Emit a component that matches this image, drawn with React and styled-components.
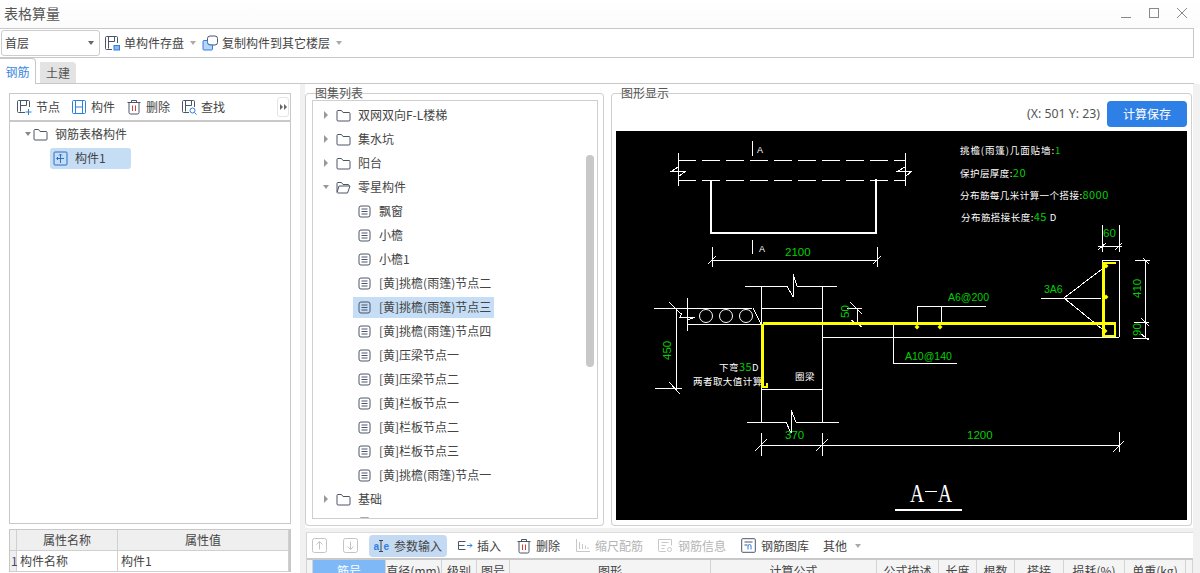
import React from "react";
import styled, { createGlobalStyle } from "styled-components";

const GlobalStyle = createGlobalStyle`
  html, body {
    margin: 0;
    padding: 0;
    background: #fff;
  }
  * {
    box-sizing: border-box;
  }
`;

const Page = styled.div`
  width: 1200px;
  height: 573px;
  overflow: hidden;
  display: flex;
  flex-direction: column;
  background: #fff;
  color: #444;
  font-family: "Noto Sans CJK SC", "Noto Sans", sans-serif;
  font-size: 12px;
  line-height: 16px;
`;

const TitleBar = styled.div`
  height: 28px;
  flex: none;
  display: flex;
  align-items: center;
  justify-content: space-between;
  padding: 0 13px 2px 4px;
  background: linear-gradient(#fff, #fbfbfb);
`;

const Title = styled.div`
  font-size: 14px;
  color: #555;
`;

const WindowButtons = styled.div`
  display: flex;
  align-items: center;
  gap: 18px;
`;

const TopBar = styled.div`
  width: 1194px;
  height: 30px;
  flex: none;
  display: flex;
  align-items: center;
  padding-left: 1px;
  border: 1px solid #c8c8c8;
  border-left: 0;
`;

const Select = styled.div`
  width: 99px;
  height: 26px;
  display: flex;
  align-items: center;
  justify-content: space-between;
  padding: 0 5px 0 3px;
  margin-right: 4px;
  border: 1px solid #ccc;
  border-radius: 3px;
`;

const Caret = styled.i`
  display: block;
  flex: none;
  width: 0;
  height: 0;
  margin-left: ${(p) => p.$left || 0}px;
  margin-right: ${(p) => p.$right || 0}px;
  border-left: 3px solid transparent;
  border-right: 3px solid transparent;
  border-top: 4px solid ${(p) => p.$color || "#aaa"};
`;

const SideCaret = styled.i`
  display: block;
  flex: none;
  width: 0;
  height: 0;
  border-top: ${(p) => p.$size || 4}px solid transparent;
  border-bottom: ${(p) => p.$size || 4}px solid transparent;
  border-left: ${(p) => p.$size || 4}px solid ${(p) => p.$color || "#999"};
`;

const ToolItem = styled.div`
  display: flex;
  align-items: center;
  gap: ${(p) => p.$gap || 5}px;
  flex: none;
  height: 22px;
  margin-left: ${(p) => p.$left || 0}px;
  color: ${(p) => (p.$disabled ? "#b4b4b4" : "#444")};
  ${(p) => p.$active && "background: #c4daf2; border-radius: 4px; padding: 0 0 0 5px;"}
  ${(p) => p.$active && "width: 78px;"}
`;

const Tabs = styled.div`
  width: 1194px;
  height: 26px;
  flex: none;
  display: flex;
  align-items: flex-end;
  gap: 4px;
  border-bottom: 1px solid #c8c8c8;
`;

const Tab = styled.div`
  width: 36px;
  height: ${(p) => (p.$active ? 26 : 21)}px;
  margin-bottom: ${(p) => (p.$active ? -1 : 0)}px;
  display: flex;
  align-items: center;
  justify-content: center;
  font-size: 12px;
  color: ${(p) => (p.$active ? "#3b88e0" : "#555")};
  background: ${(p) => (p.$active ? "#fff" : "#e3e3e3")};
  border: ${(p) => (p.$active ? "1px solid #c8c8c8" : "0")};
  border-left: 0;
  border-bottom: 0;
  border-radius: 0 4px 0 0;
`;

const Body = styled.div`
  flex: 1;
  min-height: 0;
  display: flex;
  background: #f1f1f1;
`;

const LeftColumn = styled.div`
  width: 300px;
  flex: none;
  display: flex;
  flex-direction: column;
  padding: 9px 9px 0;
  background: #fff;
`;

const LeftToolbar = styled.div`
  height: 29px;
  flex: none;
  display: flex;
  align-items: center;
  padding: 0 1px 0 6px;
  border: 1px solid #c8c8c8;
  border-bottom: 2px solid #c8c8c8;
`;

const MoreButton = styled.div`
  width: 12px;
  height: 20px;
  margin-left: auto;
  display: flex;
  align-items: center;
  justify-content: center;
  gap: 1px;
  border: 1px solid #e4e4e4;
  border-radius: 3px;
`;

const LeftTree = styled.div`
  height: 402px;
  flex: none;
  border: 1px solid #c8c8c8;
  border-top: 0;
`;

const Row = styled.div`
  height: 24px;
  display: flex;
  align-items: center;
  padding-left: ${(p) => p.$indent}px;
`;

const Arrow = styled.div`
  width: 10px;
  flex: none;
  display: flex;
  justify-content: center;
  margin-right: ${(p) => p.$gap || 0}px;
`;

const RowLabel = styled.span`
  margin-left: ${(p) => p.$gap}px;
  white-space: nowrap;
`;

const Selected = styled.div`
  height: 21px;
  width: ${(p) => p.$width}px;
  display: flex;
  align-items: center;
  padding-left: ${(p) => p.$pad}px;
  background: #c5ddf5;
  border-radius: ${(p) => p.$radius || 0}px;
`;

const PropsTable = styled.div`
  margin-top: 5px;
  border-top: 1px solid #c8c8c8;
  border-left: 1px solid #c8c8c8;
  border-right: 2px solid #c8c8c8;
`;

const PropsRow = styled.div`
  height: 21px;
  display: grid;
  grid-template-columns: 7px 101px 1fr;
  border-bottom: 1px solid #d0d0d0;
  background: ${(p) => (p.$head ? "#efefef" : "#fff")};
`;

const PropsCell = styled.div`
  display: flex;
  align-items: center;
  justify-content: ${(p) => (p.$head ? "center" : "flex-start")};
  padding-left: ${(p) => (p.$head ? 0 : 3)}px;
  border-right: 1px solid #d0d0d0;
  background: ${(p) => (p.$gray ? "#efefef" : "transparent")};
  ${(p) => p.$gray && "padding-left: 1px; color: #446;"}
`;

const Splitter = styled.div`
  width: 5px;
  flex: none;
`;

const RightColumn = styled.div`
  width: 888px;
  flex: none;
  display: flex;
  flex-direction: column;
`;

const Panels = styled.div`
  height: 444px;
  flex: none;
  display: flex;
  gap: 7px;
  padding-top: 9px;
  background: #fff;
`;

const GroupBox = styled.div`
  position: relative;
  height: 433px;
  width: ${(p) => p.$width}px;
  flex: none;
  display: flex;
  flex-direction: column;
  padding: ${(p) => (p.$tight ? "6px 5px 6px 6px" : "5px 4px")};
  border: 1px solid #d0d0d0;
  border-top-color: #cfcfcf;
  border-radius: 4px;
`;

const Legend = styled.div`
  position: absolute;
  top: -8px;
  left: 9px;
  line-height: 14px;
  color: #555;
`;

const ListBox = styled.div`
  position: relative;
  height: 419px;
  overflow: hidden;
  padding-top: 2px;
  border: 1px solid #cfcfcf;
`;

const ScrollThumb = styled.div`
  position: absolute;
  top: 54px;
  right: 3px;
  width: 8px;
  height: 212px;
  border-radius: 4px;
  background: #c8c8c8;
`;

const ViewHead = styled.div`
  height: 28px;
  flex: none;
  display: flex;
  align-items: center;
  justify-content: flex-end;
  gap: 7px;
  margin-bottom: 4px;
  padding-top: 2px;
`;

const Coords = styled.span`
  font-family: "Noto Sans", sans-serif;
  font-size: 12.3px;
  color: #555;
`;

const SaveButton = styled.div`
  width: 80px;
  height: 26px;
  display: flex;
  align-items: center;
  justify-content: center;
  background: #2f80e6;
  border-radius: 4px;
  color: #fff;
`;

const Drawing = styled.svg`
  display: block;
  width: 571px;
  height: 389px;
  flex: none;
  background: #000;
`;

const DrawText = styled.text`
  font-family: ${(p) => (p.$cjk ? '"Noto Sans CJK SC", sans-serif' : '"Liberation Sans", sans-serif')};
  font-size: ${(p) => p.$size || 11.5}px;
  letter-spacing: ${(p) => p.$track || 0}px;
  fill: ${(p) => (p.$white ? "#fff" : "#00d000")};
`;

const TitleMark = styled.text`
  font-family: "Liberation Serif", serif;
  font-size: 26px;
  fill: #fff;
`;

const BottomPanel = styled.div`
  flex: 1;
  margin-top: 4px;
  margin-left: 1px;
  background: #fff;
  border-top: 1px solid #dcdcdc;
  border-left: 1px solid #d4d4d4;
`;

const BottomToolbar = styled.div`
  height: 27px;
  display: flex;
  align-items: center;
  padding-left: 5px;
  border-bottom: 2px solid #c8c8c8;
`;

const GridHead = styled.div`
  height: 22px;
  display: grid;
  grid-template-columns: 6px 73px 56px 35px 33px 201px 166px 62px 38px 38px 49px 61px 61px 1fr;
  background: #f4f4f4;
`;

const HeadCell = styled.div`
  display: flex;
  align-items: center;
  justify-content: center;
  white-space: nowrap;
  border-right: 1px solid #d4d4d4;
  color: ${(p) => (p.$on ? "#fff" : "#444")};
  background: ${(p) => (p.$on ? "#7fb8f7" : "transparent")};
`;

const Ico = styled.svg`
  display: block;
  flex: none;
  fill: none;
  stroke: ${(p) => p.$stroke || "#4a5568"};
  stroke-width: 1;
`;

const IconLetter = styled.text`
  font-family: "Liberation Sans", sans-serif;
  font-size: 10px;
  font-weight: 700;
  fill: #2d7fe0;
  stroke: none;
`;

const BLUE = "#2d7fe0";

const NodeIcon = () => (
  <Ico width="16" height="16" viewBox="0 0 16 16">
    <path d="M9 13.5H2.5a1 1 0 0 1-1-1v-10a1 1 0 0 1 1-1h10a1 1 0 0 1 1 1V8M4.5 1.5v11M10.5 1.5v5M4.5 6.5h6" />
    <path d="M12.5 10v6M9.5 13h6" stroke={BLUE} />
  </Ico>
);

const PartIcon = () => (
  <Ico width="16" height="16" viewBox="0 0 16 16" $stroke={BLUE}>
    <rect x="1.5" y="1.5" width="13" height="13" rx="1" />
    <path d="M4.5 1.5v13M11.5 1.5v13M4.5 8h7" />
  </Ico>
);

const TrashIcon = ({ color = "#e03b3b" }) => (
  <Ico width="16" height="16" viewBox="0 0 16 16">
    <path d="M1.5 3.5h13M5.5 3V1.5h5V3M3 3.5v10a1.5 1.5 0 0 0 1.5 1.5h7a1.5 1.5 0 0 0 1.5-1.5v-10" />
    <path d="M6.5 6.5v5.5M9.5 6.5v5.5" stroke={color} />
  </Ico>
);

const FindIcon = () => (
  <Ico width="16" height="16" viewBox="0 0 16 16">
    <path d="M8 13.5H2.5a1 1 0 0 1-1-1v-10a1 1 0 0 1 1-1h10a1 1 0 0 1 1 1V8M4.5 1.5v11M10.5 1.5v5M4.5 6.5h6" />
    <circle cx="11.5" cy="11.5" r="2.5" stroke={BLUE} />
    <path d="M13.5 13.5l2 2" stroke={BLUE} />
  </Ico>
);

const SaveIcon = () => (
  <Ico width="16" height="16" viewBox="0 0 16 16">
    <path d="M8 14.5H2.5a1 1 0 0 1-1-1v-11a1 1 0 0 1 1-1h10a1 1 0 0 1 1 1V8M4.5 1.5v12M10.5 1.5v5M4.5 6.5h6" />
    <rect x="10" y="10.5" width="5.5" height="4.5" fill="#8ab8ee" stroke={BLUE} />
  </Ico>
);

const CopyIcon = () => (
  <Ico width="16" height="16" viewBox="0 0 16 16">
    <rect x="5.5" y="1" width="10" height="9" rx="2.5" />
    <path d="M5.5 5.5H2a1 1 0 0 0-1 1V14a1 1 0 0 0 1 1h7.5a1 1 0 0 0 1-1v-4H8A2.5 2.5 0 0 1 5.5 7.5z" fill="#b9d5f5" stroke={BLUE} />
  </Ico>
);

const FolderIcon = () => (
  <Ico width="15" height="13" viewBox="0 0 15 13">
    <path d="M1 11V2.5a1 1 0 0 1 1-1h3.5l1.5 2h6a1 1 0 0 1 1 1V11a1 1 0 0 1-1 1H2a1 1 0 0 1-1-1z" />
  </Ico>
);

const OpenFolderIcon = () => (
  <Ico width="15" height="13" viewBox="0 0 15 13">
    <path d="M1 11V2.5a1 1 0 0 1 1-1h3.5l1.5 2h5a1 1 0 0 1 1 1V5M1 11.5l2-6.5h11l-2.5 7H2a1 1 0 0 1-1-.5z" />
  </Ico>
);

const DocIcon = () => (
  <Ico width="13" height="13" viewBox="0 0 13 13">
    <rect x="1" y="1" width="11" height="11" rx="2" />
    <path d="M3.5 4h6M3.5 6.5h6M3.5 9h6" />
  </Ico>
);

const ComponentIcon = () => (
  <Ico width="15" height="15" viewBox="0 0 15 15" $stroke="#2d6fc0">
    <rect x="1" y="1" width="13" height="13" rx="1" />
    <path d="M7.5 3v9M4 7.5h7M5 6L3.5 7.5 5 9M6 4.5L7.5 3 9 4.5" />
  </Ico>
);

const ArrowBoxIcon = ({ down }) => (
  <Ico width="15" height="15" viewBox="0 0 15 15" $stroke="#c4c4c4">
    <rect x="0.5" y="0.5" width="14" height="14" rx="2" />
    <path d={down ? "M7.5 3.5v8M4.5 8.5l3 3 3-3" : "M7.5 11.5v-8M4.5 6.5l3-3 3 3"} />
  </Ico>
);

const ParamIcon = () => (
  <Ico width="16" height="14" viewBox="0 0 16 14" $stroke="#444">
    <IconLetter x="-0.5" y="10.5">a</IconLetter>
    <path d="M5 1.5h2M9 1.5H7v11M5 12.5h4" />
    <IconLetter x="9.5" y="10.5">e</IconLetter>
  </Ico>
);

const InsertIcon = () => (
  <Ico width="16" height="12" viewBox="0 0 16 12">
    <path d="M8.5 1.5h-7v8h7M1.5 5.5h6" />
    <path d="M10 5.5h5M13 3.5l2 2-2 2" stroke={BLUE} />
  </Ico>
);

const ScaleIcon = () => (
  <Ico width="15" height="15" viewBox="0 0 15 15" $stroke="#c8c8c8">
    <path d="M1.5 1v12.5H15M4.5 4v7M7.5 6v5M10.5 7.5V11M13 9v2" />
  </Ico>
);

const InfoIcon = () => (
  <Ico width="15" height="15" viewBox="0 0 15 15" $stroke="#c8c8c8">
    <path d="M8 13.5H1.5a1 1 0 0 1-1-1v-11h13v6M3.5 4.5h7M3.5 7.5h4M3.5 10.5h3" />
    <circle cx="11.5" cy="11.5" r="2" />
  </Ico>
);

const LibraryIcon = () => (
  <Ico width="15" height="15" viewBox="0 0 15 15">
    <rect x="0.7" y="0.7" width="13.6" height="13.6" rx="1" />
    <path d="M3.5 4h8M3.5 7h3" />
    <path d="M7 11.5V8a1.5 1.5 0 0 1 3 0v3.5" stroke={BLUE} />
  </Ico>
);

const treeItems = [
  { label: "双网双向F-L楼梯", kind: "folder" },
  { label: "集水坑", kind: "folder" },
  { label: "阳台", kind: "folder" },
  { label: "零星构件", kind: "open" },
  { label: "飘窗", kind: "doc" },
  { label: "小檐", kind: "doc" },
  { label: "小檐1", kind: "doc" },
  { label: "[黄]挑檐(雨篷)节点二", kind: "doc" },
  { label: "[黄]挑檐(雨篷)节点三", kind: "doc", selected: true },
  { label: "[黄]挑檐(雨篷)节点四", kind: "doc" },
  { label: "[黄]压梁节点一", kind: "doc" },
  { label: "[黄]压梁节点二", kind: "doc" },
  { label: "[黄]栏板节点一", kind: "doc" },
  { label: "[黄]栏板节点二", kind: "doc" },
  { label: "[黄]栏板节点三", kind: "doc" },
  { label: "[黄]挑檐(雨篷)节点一", kind: "doc" },
  { label: "基础", kind: "folder" },
  { label: "", kind: "doc" },
];

const gridColumns = ["", "筋号", "直径(mm)", "级别", "图号", "图形", "计算公式", "公式描述", "长度", "根数", "搭接", "损耗(%)", "单重(kg)", ""];

// CAD sheet, coordinates are the screen pixels of the black area
const whiteLines = [
  "M678 153V186M905 153V186M752 141V156M752 240V254",
  "M678 167L672 171H686L678 177M905 167L898 171H912L905 177",
  "M712 247V267M877 247V267M712 260H877M708 264L716 256M873 264L881 256",
  "M745 286H787L793 297V274L797 286H837",
  "M747 422H786L791 433V410L796 422H839",
  "M761 286V422M822 286V422M761 308H822M654 308H752M687 324H761M687 298V331",
  "M682 313L680 317H695L688 320M753 308L761 324",
  "M676 308V388M655 388H682M669 302L681 314M669 382L680 394",
  "M761 389H822M822 337H1119M893 325V363H957",
  "M917 306H986M917 306V322M941 306V322",
  "M1102 260V337M1119 260V337M1102 260H1119",
  "M1041 298H1101M1064 298L1102 269M1064 298L1102 329",
  "M1102 225V252M1119 225V252M1098 246H1122M1098 250L1106 243M1115 250L1122 243",
  "M1145 260V338M1135 260H1150M1134 322H1149M1133 338H1149M1143 258L1149 264M1141 318L1149 326M1141 334L1149 340",
  "M761 445H1119M761 433V456M822 433V456M1119 432V452M755 451L767 439M816 451L828 439M1113 452L1124 441",
  "M847 308H862M857 308V323M850 302L862 314M851 320L862 327",
];

const dotPoints = [
  [917, 327],
  [940, 327],
  [1106, 266],
  [1106, 297],
  [1105, 331],
];

function Sheet() {
  return (
    <Drawing viewBox="616 131 571 389">
      <g fill="none" stroke="#fff" strokeWidth="1" shapeRendering="crispEdges">
        {whiteLines.map((d) => (
          <path key={d} d={d} />
        ))}
        <path d="M678 160H905M678 180H905" strokeDasharray="18 6" />
        <path d="M711 180V233H876V179" strokeWidth="2" />
        <path d="M895 510H962" strokeWidth="2" />
        <path d="M925 491H937" />
      </g>
      <g fill="none" stroke="#fff" strokeWidth="1">
        <circle cx="706" cy="316" r="6.5" />
        <circle cx="726" cy="316" r="6.5" />
        <circle cx="746" cy="316" r="6.5" />
      </g>
      <path
        d="M762.5 323.5H1115V336H1103.5V263H1116M762.5 323.5V387H767V383"
        fill="none"
        stroke="#ffff00"
        strokeWidth="2.6"
        shapeRendering="crispEdges"
      />
      {dotPoints.map(([x, y]) => (
        <path key={`${x}-${y}`} d={`M${x} ${y - 2.5}L${x + 2.5} ${y}L${x} ${y + 2.5}L${x - 2.5} ${y}Z`} fill="#ffff00" />
      ))}

      <DrawText $white $size={9} x="757" y="153">A</DrawText>
      <DrawText $white $size={9} x="759" y="252">A</DrawText>
      <DrawText x="785" y="256">2100</DrawText>

      <DrawText $white $cjk $size={9.5} $track={0.9} x="960" y="154">挑檐(雨篷)几面贴墙:<tspan fill="#00d000">1</tspan></DrawText>
      <DrawText $white $cjk $size={9.5} $track={0.45} x="960" y="177">保护层厚度:<tspan fill="#00d000" fontSize="11">20</tspan></DrawText>
      <DrawText $white $cjk $size={9.5} $track={0.45} x="960" y="199">分布筋每几米计算一个搭接:<tspan fill="#00d000" fontSize="11">8000</tspan></DrawText>
      <DrawText $white $cjk $size={9.5} $track={0.45} x="961" y="221">分布筋搭接长度:<tspan fill="#00d000" fontSize="11">45 </tspan>D</DrawText>

      <DrawText x="1103" y="237">60</DrawText>
      <DrawText x="1044" y="293" $size={10.5}>3A6</DrawText>
      <DrawText x="948" y="301" $size={10.5}>A6@200</DrawText>
      <DrawText x="905" y="360" $size={10.5}>A10@140</DrawText>
      <DrawText x="785" y="439">370</DrawText>
      <DrawText x="967" y="439">1200</DrawText>
      <DrawText x="849" y="318" transform="rotate(-90 849 318)">50</DrawText>
      <DrawText x="671" y="360" transform="rotate(-90 671 360)">450</DrawText>
      <DrawText x="1141" y="298" transform="rotate(-90 1141 298)">410</DrawText>
      <DrawText x="1141" y="336" transform="rotate(-90 1141 336)">90</DrawText>

      <DrawText $white $cjk $size={9.5} $track={0.45} x="719" y="371">下弯<tspan fill="#00d000" fontSize="11">35</tspan>D</DrawText>
      <DrawText $white $cjk $size={9.5} $track={0.45} x="693" y="385">两者取大值计算</DrawText>
      <DrawText $white $cjk $size={9.5} $track={0.45} x="795" y="380">圈梁</DrawText>

      <TitleMark x="910" y="502" textLength="14" lengthAdjust="spacingAndGlyphs">A</TitleMark>
      <TitleMark x="938" y="502" textLength="14" lengthAdjust="spacingAndGlyphs">A</TitleMark>
    </Drawing>
  );
}

function TreeRow({ item }) {
  if (item.kind === "doc") {
    const content = (
      <>
        <DocIcon />
        <RowLabel $gap={8}>{item.label}</RowLabel>
      </>
    );
    return (
      <Row $indent={item.selected ? 40 : 45}>
        {item.selected ? <Selected $width={141} $pad={5}>{content}</Selected> : content}
      </Row>
    );
  }
  return (
    <Row $indent={8}>
      <Arrow $gap={5}>{item.kind === "open" ? <Caret $color="#999" /> : <SideCaret />}</Arrow>
      {item.kind === "open" ? <OpenFolderIcon /> : <FolderIcon />}
      <RowLabel $gap={7}>{item.label}</RowLabel>
    </Row>
  );
}

export default function App() {
  return (
    <Page>
      <GlobalStyle />
      <TitleBar>
        <Title>表格算量</Title>
        <WindowButtons>
          <Ico width="10" height="10" viewBox="0 0 10 10" $stroke="#888"><path d="M0 9.5h10" /></Ico>
          <Ico width="10" height="10" viewBox="0 0 10 10" $stroke="#888"><rect x="0.5" y="0.5" width="9" height="9" /></Ico>
          <Ico width="10" height="10" viewBox="0 0 10 10" $stroke="#888"><path d="M0 0l10 10M10 0L0 10" /></Ico>
        </WindowButtons>
      </TitleBar>

      <TopBar>
        <Select>
          首层
          <Caret $color="#666" />
        </Select>
        <ToolItem $gap={4}>
          <SaveIcon />
          单构件存盘
          <Caret $left={2} $right={6} />
        </ToolItem>
        <ToolItem $gap={4}>
          <CopyIcon />
          复制构件到其它楼层
          <Caret $left={2} />
        </ToolItem>
      </TopBar>

      <Tabs>
        <Tab $active>钢筋</Tab>
        <Tab>土建</Tab>
      </Tabs>

      <Body>
        <LeftColumn>
          <LeftToolbar>
            <ToolItem $gap={4}><NodeIcon />节点</ToolItem>
            <ToolItem $gap={4} $left={11}><PartIcon />构件</ToolItem>
            <ToolItem $gap={4} $left={11}><TrashIcon />删除</ToolItem>
            <ToolItem $gap={4} $left={11}><FindIcon />查找</ToolItem>
            <MoreButton>
              <SideCaret $size={3} $color="#666" />
              <SideCaret $size={3} $color="#666" />
            </MoreButton>
          </LeftToolbar>
          <LeftTree>
            <Row $indent={13}>
              <Arrow><Caret $color="#888" /></Arrow>
              <FolderIcon />
              <RowLabel $gap={7}>钢筋表格构件</RowLabel>
            </Row>
            <Row $indent={40}>
              <Selected $width={81} $pad={3} $radius={3}>
                <ComponentIcon />
                <RowLabel $gap={7}>构件1</RowLabel>
              </Selected>
            </Row>
          </LeftTree>
          <PropsTable>
            <PropsRow $head>
              <PropsCell />
              <PropsCell $head>属性名称</PropsCell>
              <PropsCell $head>属性值</PropsCell>
            </PropsRow>
            <PropsRow>
              <PropsCell $gray>1</PropsCell>
              <PropsCell>构件名称</PropsCell>
              <PropsCell>构件1</PropsCell>
            </PropsRow>
          </PropsTable>
        </LeftColumn>

        <Splitter />

        <RightColumn>
          <Panels>
            <GroupBox $width={299} $tight>
              <Legend>图集列表</Legend>
              <ListBox>
                {treeItems.map((item, i) => (
                  <TreeRow key={i} item={item} />
                ))}
                <ScrollThumb />
              </ListBox>
            </GroupBox>
            <GroupBox $width={581}>
              <Legend>图形显示</Legend>
              <ViewHead>
                <Coords>(X: 501 Y: 23)</Coords>
                <SaveButton>计算保存</SaveButton>
              </ViewHead>
              <Sheet />
            </GroupBox>
          </Panels>

          <BottomPanel>
            <BottomToolbar>
              <ArrowBoxIcon />
              <ToolItem $left={16}><ArrowBoxIcon down /></ToolItem>
              <ToolItem $left={11} $active $gap={4}><ParamIcon />参数输入</ToolItem>
              <ToolItem $left={10} $gap={4}><InsertIcon />插入</ToolItem>
              <ToolItem $left={15} $gap={4}><TrashIcon />删除</ToolItem>
              <ToolItem $left={15} $disabled><ScaleIcon />缩尺配筋</ToolItem>
              <ToolItem $left={15} $disabled><InfoIcon />钢筋信息</ToolItem>
              <ToolItem $left={15}><LibraryIcon />钢筋图库</ToolItem>
              <ToolItem $left={14}>其他<Caret $left={3} /></ToolItem>
            </BottomToolbar>
            <GridHead>
              {gridColumns.map((name, i) => (
                <HeadCell key={i} $on={name === "筋号"}>{name}</HeadCell>
              ))}
            </GridHead>
          </BottomPanel>
        </RightColumn>
      </Body>
    </Page>
  );
}
